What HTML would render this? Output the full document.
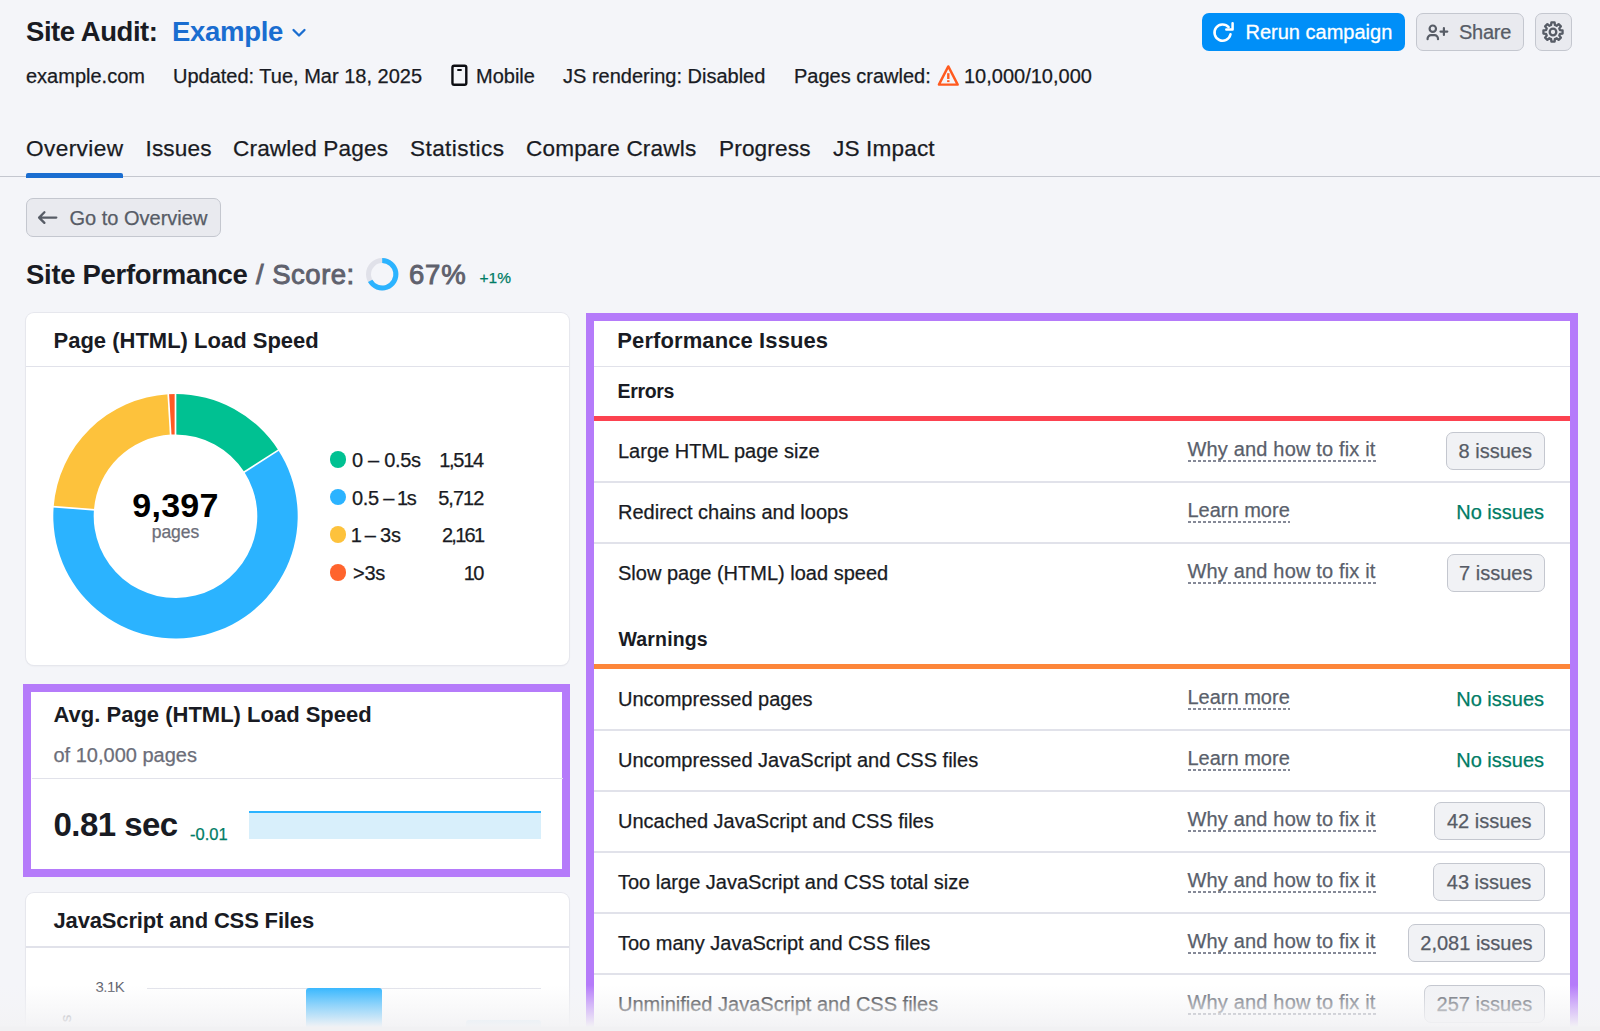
<!DOCTYPE html>
<html>
<head>
<meta charset="utf-8">
<style>
*{box-sizing:border-box;margin:0;padding:0}
html,body{width:1600px;height:1031px;overflow:hidden}
body{background:#f4f5f9;font-family:"Liberation Sans",sans-serif;color:#191b23;position:relative}
.a{position:absolute;white-space:nowrap;line-height:1}
.b{font-weight:bold}
.a:not(.b),.pill{-webkit-text-stroke:.25px}
.card{position:absolute;background:#fff;border-radius:8px;box-shadow:0 0 0 1px #e6e7ed,0 1px 2px rgba(25,27,35,.08)}
.hl{position:absolute;background:#e1e2ea;height:1.5px}
.meta{font-size:20px;top:65.5px;color:#191b23}
.tab{font-size:22.6px;top:138.2px;letter-spacing:.15px;color:#191b23}
.rowt{font-size:20px;left:618px;color:#191b23}
.lnk{font-size:20px;left:1187.5px;color:#5a5f6b;letter-spacing:.17px}
.lm{letter-spacing:0}
.lnk:after{content:"";position:absolute;left:0;right:0;bottom:-2.7px;height:1.6px;background:repeating-linear-gradient(90deg,#858997 0,#858997 3px,transparent 3px,transparent 5px)}
.noi{font-size:20px;color:#007c65;right:56px}
.pill{position:absolute;right:55.4px;height:37.6px;border:1px solid #c4c7cf;border-radius:7px;background:#f1f2f5;font-size:20px;color:#575c66;line-height:37px;padding:0;white-space:nowrap;text-align:center}
.leg{font-size:20px;left:352px;letter-spacing:-.3px}
.legv{font-size:20px;right:1117px}
.dot{position:absolute;left:329.6px;width:16.8px;height:16.8px;border-radius:50%}
</style>
</head>
<body>

<!-- HEADER -->
<div class="a b" id="t1" style="left:26px;top:18px;font-size:27.5px;letter-spacing:-.45px">Site Audit:</div>
<div class="a b" id="t2" style="left:172px;top:18px;font-size:27.5px;letter-spacing:-.3px;color:#1a6dd0">Example</div>
<svg class="a" style="left:290px;top:26px" width="18" height="14" viewBox="0 0 18 14"><path d="M3.5 4 L9 9.5 L14.5 4" fill="none" stroke="#1a6dd0" stroke-width="2.3" stroke-linecap="round" stroke-linejoin="round"/></svg>

<div class="a meta" id="m1" style="left:26px">example.com</div>
<div class="a meta" id="m2" style="left:173px">Updated: Tue, Mar 18, 2025</div>
<svg class="a" style="left:446px;top:60px" width="28" height="30" viewBox="446 60 28 30"><rect x="452.45" y="65.7" width="13.85" height="19.1" rx="1.7" fill="none" stroke="#0c0d12" stroke-width="2.4"/><path d="M458 70 H461" stroke="#0c0d12" stroke-width="1.9" stroke-linecap="round"/></svg>
<div class="a meta" id="m3" style="left:476px">Mobile</div>
<div class="a meta" id="m4" style="left:563px">JS rendering: Disabled</div>
<div class="a meta" id="m5" style="left:794px">Pages crawled:</div>
<svg class="a" style="left:934px;top:60px" width="30" height="30" viewBox="934 60 30 30"><path d="M948.3 66.4 L957.7 84.6 H938.9 Z" fill="none" stroke="#ff5a1f" stroke-width="2.4" stroke-linejoin="round"/><path d="M948.3 73.2 V79" stroke="#ff5a1f" stroke-width="2.4"/><rect x="947.1" y="80.2" width="2.4" height="1.9" fill="#ff5a1f"/></svg>
<div class="a meta" id="m6" style="left:964px">10,000/10,000</div>

<!-- buttons -->
<div class="a" style="left:1202px;top:13px;width:203px;height:38px;background:#008ff8;border-radius:7px"></div>
<svg class="a" style="left:1208px;top:16px" width="32" height="32" viewBox="1208 16 32 32"><path d="M1230.52 34.28 A8.1 8.1 0 1 1 1228.62 27.18" fill="none" stroke="#fff" stroke-width="2.5" stroke-linecap="round"/><path d="M1232.6 23.3 V29.6 H1226.3" fill="none" stroke="#fff" stroke-width="2.5" stroke-linecap="round" stroke-linejoin="round"/></svg>
<div class="a" id="bt1" style="left:1245.5px;top:22px;font-size:20px;color:#fff;-webkit-text-stroke:.3px #fff">Rerun campaign</div>
<div class="a" style="left:1416px;top:13.1px;width:107.6px;height:37.8px;background:#e9eaef;border:1px solid #c4c7cf;border-radius:7px"></div>
<svg class="a" style="left:1420px;top:14px" width="36" height="36" viewBox="1420 14 36 36"><circle cx="1432.8" cy="28.7" r="3.2" fill="none" stroke="#575c66" stroke-width="2.2"/><path d="M1427.6 39.2 V38.6 A3.4 3.4 0 0 1 1431 35.2 H1434.6 A3.4 3.4 0 0 1 1438 38.6 V39.2" fill="none" stroke="#575c66" stroke-width="2.2" stroke-linecap="round"/><path d="M1443.9 28.2 V35 M1440.5 31.6 H1447.3" stroke="#575c66" stroke-width="2.2" stroke-linecap="round"/></svg>
<div class="a" id="bt2" style="left:1459px;top:22px;font-size:20px;letter-spacing:-.25px;color:#575c66">Share</div>
<div class="a" style="left:1534.5px;top:13.1px;width:37.8px;height:37.8px;background:#e9eaef;border:1px solid #c4c7cf;border-radius:7px"></div>
<svg class="a" style="left:1539px;top:17.8px" width="28" height="28" viewBox="-14 -14 28 28"><path fill="none" stroke="#575c66" stroke-width="2.3" stroke-linejoin="round" d="M-1.92 -6.94 L-1.60 -9.57 L1.60 -9.57 L1.92 -6.94 L3.55 -6.27 L5.63 -7.90 L7.90 -5.63 L6.27 -3.55 L6.94 -1.92 L9.57 -1.60 L9.57 1.60 L6.94 1.92 L6.27 3.55 L7.90 5.63 L5.63 7.90 L3.55 6.27 L1.92 6.94 L1.60 9.57 L-1.60 9.57 L-1.92 6.94 L-3.55 6.27 L-5.63 7.90 L-7.90 5.63 L-6.27 3.55 L-6.94 1.92 L-9.57 1.60 L-9.57 -1.60 L-6.94 -1.92 L-6.27 -3.55 L-7.90 -5.63 L-5.63 -7.90 L-3.55 -6.27 Z"/><circle cx="0" cy="0" r="3.3" fill="none" stroke="#575c66" stroke-width="2.3"/></svg>

<!-- TABS -->
<div class="a tab" id="tb1" style="left:26px;letter-spacing:.4px">Overview</div>
<div class="a tab" id="tb2" style="left:145.5px">Issues</div>
<div class="a tab" id="tb3" style="left:233px">Crawled Pages</div>
<div class="a tab" id="tb4" style="left:410px;letter-spacing:.4px">Statistics</div>
<div class="a tab" id="tb5" style="left:526px">Compare Crawls</div>
<div class="a tab" id="tb6" style="left:719px">Progress</div>
<div class="a tab" id="tb7" style="left:833px">JS Impact</div>
<div class="hl" style="left:0;top:176px;width:1600px;background:#c4c7cf;height:1px"></div>
<div class="a" style="left:26px;top:172.5px;width:97px;height:5px;background:#1a6dd0;border-radius:2px 2px 0 0"></div>

<!-- Go to overview -->
<div class="a" style="left:25.8px;top:198.4px;width:195px;height:38.2px;background:#e9eaef;border:1px solid #c4c7cf;border-radius:7px"></div>
<svg class="a" style="left:32px;top:204px" width="32" height="28" viewBox="32 204 32 28"><path d="M56.3 217.6 H39.3 M44.4 212.3 L39.1 217.6 L44.4 222.9" fill="none" stroke="#575c66" stroke-width="2.3" stroke-linecap="round" stroke-linejoin="round"/></svg>
<div class="a" id="go" style="left:69.5px;top:207.7px;font-size:20px;color:#575c66">Go to Overview</div>

<!-- Title -->
<div class="a b" id="sp1" style="left:26px;top:261px;font-size:27.5px;letter-spacing:-.3px">Site Performance</div>
<div class="a" id="sp2" style="left:256px;top:261px;font-size:27.5px;letter-spacing:.5px;color:#5f616d;-webkit-text-stroke:.9px #5f616d">/ Score:</div>
<svg class="a" style="left:0;top:0" width="420" height="300" viewBox="0 0 420 300"><circle cx="382.2" cy="274.3" r="13.7" fill="none" stroke="#e0e1e9" stroke-width="5"/>
<path d="M382.20 260.60 A13.7 13.7 0 1 1 370.19 280.90" fill="none" stroke="#2bb3ff" stroke-width="5"/></svg>
<div class="a" id="sp3" style="left:409px;top:261px;font-size:27.5px;letter-spacing:.8px;color:#5f616d;-webkit-text-stroke:.9px #5f616d">67%</div>
<div class="a" id="sp4" style="left:479.5px;top:269.5px;font-size:15.5px;color:#007c65">+1%</div>

<!-- CARD 1 -->
<div class="card" style="left:26px;top:312.5px;width:542.7px;height:352.3px"></div>
<div class="a b" id="c1t" style="left:53.5px;top:329.8px;font-size:22px">Page (HTML) Load Speed</div>
<div class="hl" style="left:26px;top:365.5px;width:542.5px"></div>
<svg class="a" style="left:0;top:380px" width="320" height="270" viewBox="0 380 320 270">
<path d="M175.50 394.00 A122.2 122.2 0 0 1 278.33 450.18 L244.34 472.01 A81.8 81.8 0 0 0 175.50 434.40 Z" fill="#00c192"/>
<path d="M278.33 450.18 A122.2 122.2 0 1 1 53.68 506.61 L93.95 509.78 A81.8 81.8 0 1 0 244.34 472.01 Z" fill="#2bb3ff"/>
<path d="M53.68 506.61 A122.2 122.2 0 0 1 168.25 394.22 L170.65 434.54 A81.8 81.8 0 0 0 93.95 509.78 Z" fill="#fdc23c"/>
<path d="M168.25 394.22 A122.2 122.2 0 0 1 175.50 394.00 L175.50 434.40 A81.8 81.8 0 0 0 170.65 434.54 Z" fill="#ff5a24"/>
<path d="M175.50 393.00 L175.50 435.40" stroke="#fff" stroke-width="1.7"/>
<path d="M279.17 449.64 L243.49 472.55" stroke="#fff" stroke-width="1.7"/>
<path d="M52.68 506.53 L94.95 509.86" stroke="#fff" stroke-width="1.7"/>
<path d="M168.19 393.22 L170.71 435.54" stroke="#fff" stroke-width="1.7"/>
</svg>
<div class="a b" id="dn" style="left:75.5px;width:200px;text-align:center;top:487.6px;font-size:34px;letter-spacing:.3px;color:#000">9,397</div>
<div class="a" id="dp" style="left:75.5px;width:200px;text-align:center;top:524.3px;font-size:17.5px;color:#6c6e79">pages</div>

<div class="dot" style="top:451px;background:#00c192"></div>
<div class="dot" style="top:488.7px;background:#2bb3ff"></div>
<div class="dot" style="top:526.4px;background:#fdc23c"></div>
<div class="dot" style="top:564.2px;background:#ff642d"></div>
<div class="a leg" id="l1" style="top:450px">0 – 0.5s</div>
<div class="a leg" id="l2" style="top:487.7px;word-spacing:-1px">0.5 – <span style="margin:0 -1.2px">1</span>s</div>
<div class="a leg" id="l3" style="left:350.8px;top:525.4px;word-spacing:-.7px"><span style="margin-right:-1.5px">1</span> – 3s</div>
<div class="a leg" id="l4" style="left:353px;top:563.2px">&gt;3s</div>
<div class="a legv" id="v1" style="top:450px;letter-spacing:-1.3px;right:1117.2px">1,514</div>
<div class="a legv" id="v2" style="top:487.7px;letter-spacing:-1px;right:1116.7px">5,712</div>
<div class="a legv" id="v3" style="top:525.4px;letter-spacing:-1.75px;right:1116.7px">2,161</div>
<div class="a legv" id="v4" style="top:563.2px;letter-spacing:-1.75px;right:1117.4px">10</div>

<!-- CARD 2 (highlighted) -->
<div class="a" style="left:23.2px;top:683.6px;width:547.2px;height:193.4px;background:#b57bfa"></div>
<div class="a" style="left:31.2px;top:691.6px;width:531.2px;height:177.5px;background:#fff"></div>
<div class="a b" id="c2t" style="left:53.5px;top:704px;font-size:22px">Avg. Page (HTML) Load Speed</div>
<div class="a" id="c2s" style="left:53.5px;top:744.8px;font-size:20px;color:#6c6e79">of 10,000 pages</div>
<div class="hl" style="left:31.5px;top:777.5px;width:531px"></div>
<div class="a b" id="c2v" style="left:53.5px;top:808px;font-size:33px;letter-spacing:-.55px">0.81 sec</div>
<div class="a" id="c2d" style="left:190px;top:825.5px;font-size:16.5px;color:#007c65">-0.01</div>
<div class="a" style="left:248.5px;top:811px;width:292.5px;height:27.5px;background:#d8effb;border-top:2px solid #2bb3ff"></div>

<!-- CARD 3 -->
<div class="card" style="left:26px;top:892.8px;width:542.5px;height:200px"></div>
<div class="a b" id="c3t" style="left:53.5px;top:909.5px;font-size:22px;letter-spacing:-.15px">JavaScript and CSS Files</div>
<div class="hl" style="left:26px;top:946px;width:542.5px"></div>
<div class="a" id="c3k" style="left:95.5px;top:979.3px;font-size:15px;color:#5f626d;letter-spacing:-.5px;-webkit-text-stroke:0">3.1K</div>
<div class="hl" style="left:147px;top:987.7px;width:394px;height:1.2px"></div>
<div class="a" style="left:306.2px;top:988px;width:75.6px;height:50px;background:#2bb3ff;border-radius:3px 3px 0 0"></div>
<div class="a" style="left:466px;top:1020px;width:75px;height:20px;background:#c9e7f8;border-radius:3px 3px 0 0"></div>
<div class="a" style="left:61.5px;top:1011px;font-size:15px;color:#6c6e79;transform:rotate(-90deg)">s</div>

<!-- RIGHT PANEL -->
<div class="a" style="left:586.1px;top:312.5px;width:991.6px;height:760px;background:#b57bfa"></div>
<div class="a" style="left:594.2px;top:321px;width:975.5px;height:760px;background:#fff"></div>
<div class="a b" id="r0" style="left:617.3px;top:329.6px;font-size:22px;letter-spacing:.1px">Performance Issues</div>
<div class="hl" style="left:594.2px;top:365.5px;width:975.5px"></div>
<div class="a b" id="r1" style="left:617.5px;top:381.6px;font-size:19.5px;letter-spacing:-.35px">Errors</div>
<div class="a" style="left:594.2px;top:416.1px;width:975.5px;height:4.8px;background:#fc4250"></div>

<div class="a rowt" id="e1" style="top:441px">Large HTML page size</div>
<div class="a lnk" id="k1" style="top:439px">Why and how to fix it</div>
<div class="pill" id="p1" style="width:98.8px;top:432px">8 issues</div>
<div class="hl" style="left:594.2px;top:481px;width:975.5px"></div>

<div class="a rowt" id="e2" style="top:502px">Redirect chains and loops</div>
<div class="a lnk lm" id="k2" style="top:500px">Learn more</div>
<div class="a noi" id="n2" style="top:502px">No issues</div>
<div class="hl" style="left:594.2px;top:542px;width:975.5px"></div>

<div class="a rowt" id="e3" style="top:563px">Slow page (HTML) load speed</div>
<div class="a lnk" id="k3" style="top:561px">Why and how to fix it</div>
<div class="pill" id="p3" style="width:97.8px;top:554px">7 issues</div>

<div class="a b" id="r2" style="left:618.5px;top:630.1px;font-size:19.5px;letter-spacing:.15px">Warnings</div>
<div class="a" style="left:594.2px;top:664.1px;width:975.5px;height:4.8px;background:#fd863a"></div>

<div class="a rowt" id="w1" style="top:689px">Uncompressed pages</div>
<div class="a lnk lm" id="k4" style="top:687px">Learn more</div>
<div class="a noi" id="n4" style="top:689px">No issues</div>
<div class="hl" style="left:594.2px;top:729px;width:975.5px"></div>

<div class="a rowt" id="w2" style="top:750px">Uncompressed JavaScript and CSS files</div>
<div class="a lnk lm" id="k5" style="top:748px">Learn more</div>
<div class="a noi" id="n5" style="top:750px">No issues</div>
<div class="hl" style="left:594.2px;top:790px;width:975.5px"></div>

<div class="a rowt" id="w3" style="top:811px">Uncached JavaScript and CSS files</div>
<div class="a lnk" id="k6" style="top:809px">Why and how to fix it</div>
<div class="pill" id="p6" style="width:110.8px;top:802px">42 issues</div>
<div class="hl" style="left:594.2px;top:851px;width:975.5px"></div>

<div class="a rowt" id="w4" style="top:872px">Too large JavaScript and CSS total size</div>
<div class="a lnk" id="k7" style="top:870px">Why and how to fix it</div>
<div class="pill" id="p7" style="width:111.2px;top:863px">43 issues</div>
<div class="hl" style="left:594.2px;top:912px;width:975.5px"></div>

<div class="a rowt" id="w5" style="top:933px">Too many JavaScript and CSS files</div>
<div class="a lnk" id="k8" style="top:931px">Why and how to fix it</div>
<div class="pill" id="p8" style="width:136.3px;top:924px">2,081 issues</div>
<div class="hl" style="left:594.2px;top:973px;width:975.5px"></div>

<div class="a rowt" id="w6" style="top:994px">Unminified JavaScript and CSS files</div>
<div class="a lnk" id="k9" style="top:992px">Why and how to fix it</div>
<div class="pill" id="p9" style="width:120.4px;top:985px">257 issues</div>

<!-- bottom fade -->
<div class="a" style="left:0;top:985px;width:1600px;height:46px;background:linear-gradient(to bottom,rgba(244,244,246,0) 0,rgba(244,244,246,.5) 20px,rgba(243,243,245,.97) 41px,rgba(241,241,243,1) 42px,rgba(241,241,243,1) 46px)"></div>
</body>
</html>
